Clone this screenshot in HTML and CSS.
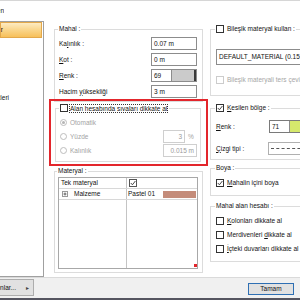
FILE: index.html
```html
<!DOCTYPE html>
<html>
<head>
	<meta charset="utf-8">
	<title>Mahal özellikleri</title>
	<link rel="stylesheet" href="styles.css">
</head>
<body>
<div class="dialog">
	<div class="top"><span class="crumb">Seçilen</span></div>
	<div class="main">
		<div class="list">
			<div class="item active"><span>Genel ayarlar</span></div>
			<div class="item"></div>
			<div class="item"></div>
			<div class="item"></div>
			<div class="item far"><span>Mahal özellikleri</span></div>
		</div>

		<div class="col left">
			<fieldset class="group mahal">
				<legend>Mahal :</legend>
				<div class="row"><label>Ka<u>l</u>ınlık :</label><span class="txt">0.07 m</span></div>
				<div class="row"><label><u>K</u>ot :</label><span class="txt">0 m</span></div>
				<div class="row"><label><u>R</u>enk :</label><span class="color"><span class="num">69</span><span class="sw gray"></span></span></div>
				<div class="row"><label>Hacim <u>y</u>üksekliği</label><span class="txt">3 m</span></div>
			</fieldset>

			<div class="mark">
				<fieldset class="group siva">
					<legend><span class="cb"></span><span class="focus">Alan hesabında sıvaları dikkate al</span></legend>
					<div class="opt"><span class="rb on"></span>Otomatik</div>
					<div class="opt"><span class="rb"></span>Yüzde<span class="txt off short">3</span><span class="unit">%</span></div>
					<div class="opt"><span class="rb"></span>Kalınlık<span class="txt off wide">0.015 m</span></div>
				</fieldset>
			</div>

			<fieldset class="group materyal">
				<legend>Materyal :</legend>
				<div class="grid">
					<div class="tr">
						<div class="td">Tek materyal</div>
						<div class="td"><span class="cb"><svg width="6" height="6" viewBox="0 0 6 6"><polyline points="0.8,3 2.4,4.8 5.4,1" fill="none" stroke="#333" stroke-width="0.9"/></svg></span></div>
					</div>
					<div class="tr">
						<div class="td"><svg class="plus" width="6" height="6" viewBox="0 0 6 6"><rect x="0.5" y="0.5" width="5" height="5" fill="#fff" stroke="#9a9a9a"/><path d="M1.5 3h3M3 1.5v3" stroke="#444" stroke-width="0.8"/></svg>Malzeme</div>
						<div class="td">Pastel 01<span class="sw brown"></span></div>
					</div>
					<div class="tr rest">
						<div class="td"></div>
						<div class="td"><span class="grip"></span></div>
					</div>
				</div>
			</fieldset>
		</div>

		<div class="col right">
			<fieldset class="group bilesik">
				<legend><span class="cb"></span><span>Bileşik materyal kullan :</span></legend>
				<div class="combo">DEFAULT_MATERIAL (0.15 m)</div>
				<div class="chk off"><span class="cb"></span><span>Bileşik materyali ters çevir</span></div>
			</fieldset>

			<fieldset class="group kesilen">
				<legend><span class="cb"><svg width="6" height="6" viewBox="0 0 6 6"><polyline points="0.8,3 2.4,4.8 5.4,1" fill="none" stroke="#333" stroke-width="0.9"/></svg></span><span><u>K</u>esilen bölge :</span></legend>
				<div class="row"><label><u>R</u>enk :</label><span class="color"><span class="num">71</span><span class="sw green"></span></span></div>
				<div class="row"><label><u>Ç</u>izgi tipi :</label><span class="combo line"><span class="dash"></span></span></div>
			</fieldset>

			<fieldset class="group boya">
				<legend>Boya :</legend>
				<div class="chk"><span class="cb"><svg width="6" height="6" viewBox="0 0 6 6"><polyline points="0.8,3 2.4,4.8 5.4,1" fill="none" stroke="#333" stroke-width="0.9"/></svg></span><span><u>M</u>ahalin içini boya</span></div>
			</fieldset>

			<fieldset class="group hesap">
				<legend>Mahal alan hesabı :</legend>
				<div class="chk"><span class="cb"></span><span><u>K</u>olonları dikkate al</span></div>
				<div class="chk"><span class="cb"></span><span>Merdivenleri <u>d</u>ikkate al</span></div>
				<div class="chk"><span class="cb"></span><span><u>İ</u>çteki duvarları dikkate al</span></div>
			</fieldset>
		</div>
	</div>

	<div class="foot">
		<div class="btn more"><span>Kolonlar...</span><span class="arrow">▸</span></div>
		<div class="btn ok">Tamam</div>
	</div>
</div>
</body>
</html>
```

FILE: styles.css
```css
body{
	margin: 0;
	font-family: "Liberation Sans", Arial, sans-serif;
	font-size: 6.5px;
	line-height: 8px;
	color: #111;
	background: #fff;
	overflow: hidden;
}
u{
	text-decoration-thickness: 0.5px;
}
.dialog{
	width: 300px;
	height: 300px;
	box-sizing: border-box;
	border-top: 1px solid #d6d6d6;
	display: flex;
	flex-direction: column;
	overflow: hidden;
}
.top{
	height: 19px;
	display: flex;
	align-items: center;
}
.crumb{
	width: 4px;
	display: flex;
	justify-content: flex-end;
	white-space: nowrap;
	overflow: hidden;
}
.main{
	height: 257px;
	display: flex;
}

/* liste */
.list{
	width: 45px;
	height: 256px;
	margin: 1px 0 0 -1px;
	box-sizing: border-box;
	border: 1px solid #a0a0a0;
	flex-shrink: 0;
}
.item{
	height: 16px;
	margin: 0 1px 1px 0;
	padding-right: 38px;
	display: flex;
	align-items: center;
	justify-content: flex-end;
	white-space: nowrap;
	overflow: hidden;
}
.item.active{
	box-sizing: border-box;
	border: 1px solid #e3a84a;
	background: linear-gradient(#fdebc2, #fad58a 50%, #f7c05a);
}
.item.far{
	padding-right: 33px;
}

/* kolonlar */
.col{
	display: flex;
	flex-direction: column;
	flex-shrink: 0;
}
.col.left{
	width: 149px;
	margin-left: 10px;
}
.col.right{
	width: 110px;
	margin-left: 7px;
}
.group{
	margin: 0;
	padding: 0;
	border: 1px solid #dcdcdc;
	min-width: 0;
}
.group legend{
	height: 8px;
	padding: 0 1px;
	margin-left: -1px;
	display: flex;
	align-items: center;
	white-space: nowrap;
}
.row{
	height: 13px;
	display: flex;
	align-items: center;
}
.row label{
	flex: 1;
	white-space: nowrap;
}
.txt{
	width: 46px;
	height: 13px;
	box-sizing: border-box;
	border: 1px solid #8c8c8c;
	padding-left: 2px;
	line-height: 11px;
	white-space: nowrap;
}
.color{
	width: 46px;
	height: 13px;
	box-sizing: border-box;
	border: 1px solid #8c8c8c;
	display: flex;
}
.color .num{
	flex: 1;
	padding-left: 2px;
	line-height: 11px;
}
.sw{
	display: block;
}
.sw.gray{
	width: 22px;
	background: #cbcbcb;
	border-left: 1px solid #8c8c8c;
	border-right: 2px solid #3a3a3a;
}
.sw.green{
	width: 22px;
	background: #d5e86c;
	border-left: 1px solid #8c8c8c;
}
.sw.brown{
	width: 33px;
	height: 7px;
	margin-left: auto;
	margin-right: 1px;
	background: #c48c7a;
}

/* Mahal */
.mahal{
	margin-top: 5px;
	padding: 4px 5px 3px 4px;
}
.mahal .row + .row{
	margin-top: 3px;
}

/* kırmızı çerçeve */
.mark{
	margin: -3px -5px 0;
	padding: 3px 5px 2px 4px;
	border: 2px solid #e3262c;
}
.siva{
	padding: 4px 3px 4px 4px;
}
.cb{
	width: 8px;
	height: 8px;
	box-sizing: border-box;
	border: 1px solid #333;
	background: #fff;
	display: flex;
	align-items: center;
	justify-content: center;
	flex-shrink: 0;
}
.siva legend .cb{
	margin-right: 1px;
}
.focus{
	border: 1px dotted #333;
	line-height: 7px;
}
.opt{
	height: 13px;
	display: flex;
	align-items: center;
	color: #a3a3a3;
}
.opt + .opt{
	margin-top: 1px;
}
.rb{
	width: 7px;
	height: 7px;
	box-sizing: border-box;
	border: 1px solid #bdbdbd;
	border-radius: 50%;
	margin-right: 3px;
	display: flex;
	align-items: center;
	justify-content: center;
}
.rb.on:after{
	content: "";
	width: 3px;
	height: 3px;
	border-radius: 50%;
	background: #b5b5b5;
}
.txt.off{
	margin-left: auto;
	border-color: #cfcfcf;
	color: #9a9a9a;
	text-align: right;
	padding-right: 2px;
}
.txt.short{
	width: 22px;
}
.txt.wide{
	width: 34px;
}
.unit{
	width: 12px;
	text-align: center;
}

/* Materyal */
.materyal{
	margin-top: 1px;
	padding: 2px 4px 3px 3px;
}
.grid{
	height: 92px;
	box-sizing: border-box;
	border: 1px solid #a8a8a8;
	display: flex;
	flex-direction: column;
}
.tr{
	height: 10px;
	display: flex;
	border-bottom: 1px solid #d8d8d8;
}
.tr.rest{
	flex: 1;
	border-bottom: none;
}
.td{
	display: flex;
	align-items: center;
	white-space: nowrap;
}
.td:first-child{
	width: 68px;
	padding-left: 2px;
	box-sizing: border-box;
	border-right: 1px solid #c4c4c4;
}
.td + .td{
	flex: 1;
	padding-left: 1px;
}
.tr .td .cb{
	margin-left: 1px;
	border-color: #555;
}
.plus{
	margin: 0 6px 0 1px;
}
.rest .td + .td{
	align-items: flex-end;
	justify-content: flex-end;
}
.grip{
	width: 3px;
	height: 3px;
	margin: 0 0 1px;
	background: #e3262c;
}

/* sağ kolon */
.right .group{
	padding: 0 0 0 5px;
}
.bilesik{
	margin-top: 5px;
}
.right legend .cb{
	margin-right: 3px;
}
.combo{
	height: 16px;
	box-sizing: border-box;
	border: 1px solid #8c8c8c;
	padding-left: 2px;
	line-height: 14px;
	white-space: nowrap;
	overflow: hidden;
}
.bilesik .combo{
	margin-top: 16px;
}
.chk{
	height: 8px;
	display: flex;
	align-items: center;
	white-space: nowrap;
}
.chk .cb{
	margin-right: 3px;
}
.chk.off{
	color: #a6a6a6;
}
.chk.off .cb{
	border-color: #cccccc;
}
.bilesik .chk{
	margin: 11px 0 11px;
}
.kesilen{
	margin-top: 8px;
}
.kesilen .row{
	margin-top: 8px;
}
.kesilen .row + .row{
	margin: 9px 0 4px;
}
.kesilen .row label{
	flex: none;
	width: 53px;
}
.kesilen .color{
	width: 44px;
	border-color: #7a7a7a;
}
.combo.line{
	width: 44px;
	height: 13px;
	display: flex;
	align-items: center;
	border-color: #b0b0b0;
	margin-left: -1px;
}
.dash{
	width: 100%;
	border-top: 1px dashed #555;
}
.boya{
	margin-top: 4px;
}
.boya .chk{
	margin: 7px 0 8px;
}
.hesap{
	margin-top: 6px;
}
.hesap .chk{
	margin-top: 6px;
}
.hesap .chk:first-of-type{
	margin-top: 7px;
}
.hesap .chk:last-child{
	margin-bottom: 8px;
}

/* alt çubuk */
.foot{
	height: 23px;
	box-sizing: border-box;
	border-top: 1px solid #dadada;
	border-bottom: 2px solid #555560;
	background: #f0f0f0;
	display: flex;
	justify-content: space-between;
	align-items: flex-start;
}
.btn{
	box-sizing: border-box;
	background: #e1e1e1;
	border: 1px solid #adadad;
	display: flex;
	align-items: center;
	white-space: nowrap;
}
.btn.more{
	width: 64px;
	height: 17px;
	margin: 1px 0 0 -30px;
	justify-content: flex-end;
	padding-right: 4px;
	overflow: hidden;
}
.arrow{
	margin-left: 10px;
	font-size: 6px;
	color: #444;
}
.btn.ok{
	width: 46px;
	height: 12px;
	margin: 5px 6px 0 0;
	justify-content: center;
	border-color: #2e6fb3;
}
```
